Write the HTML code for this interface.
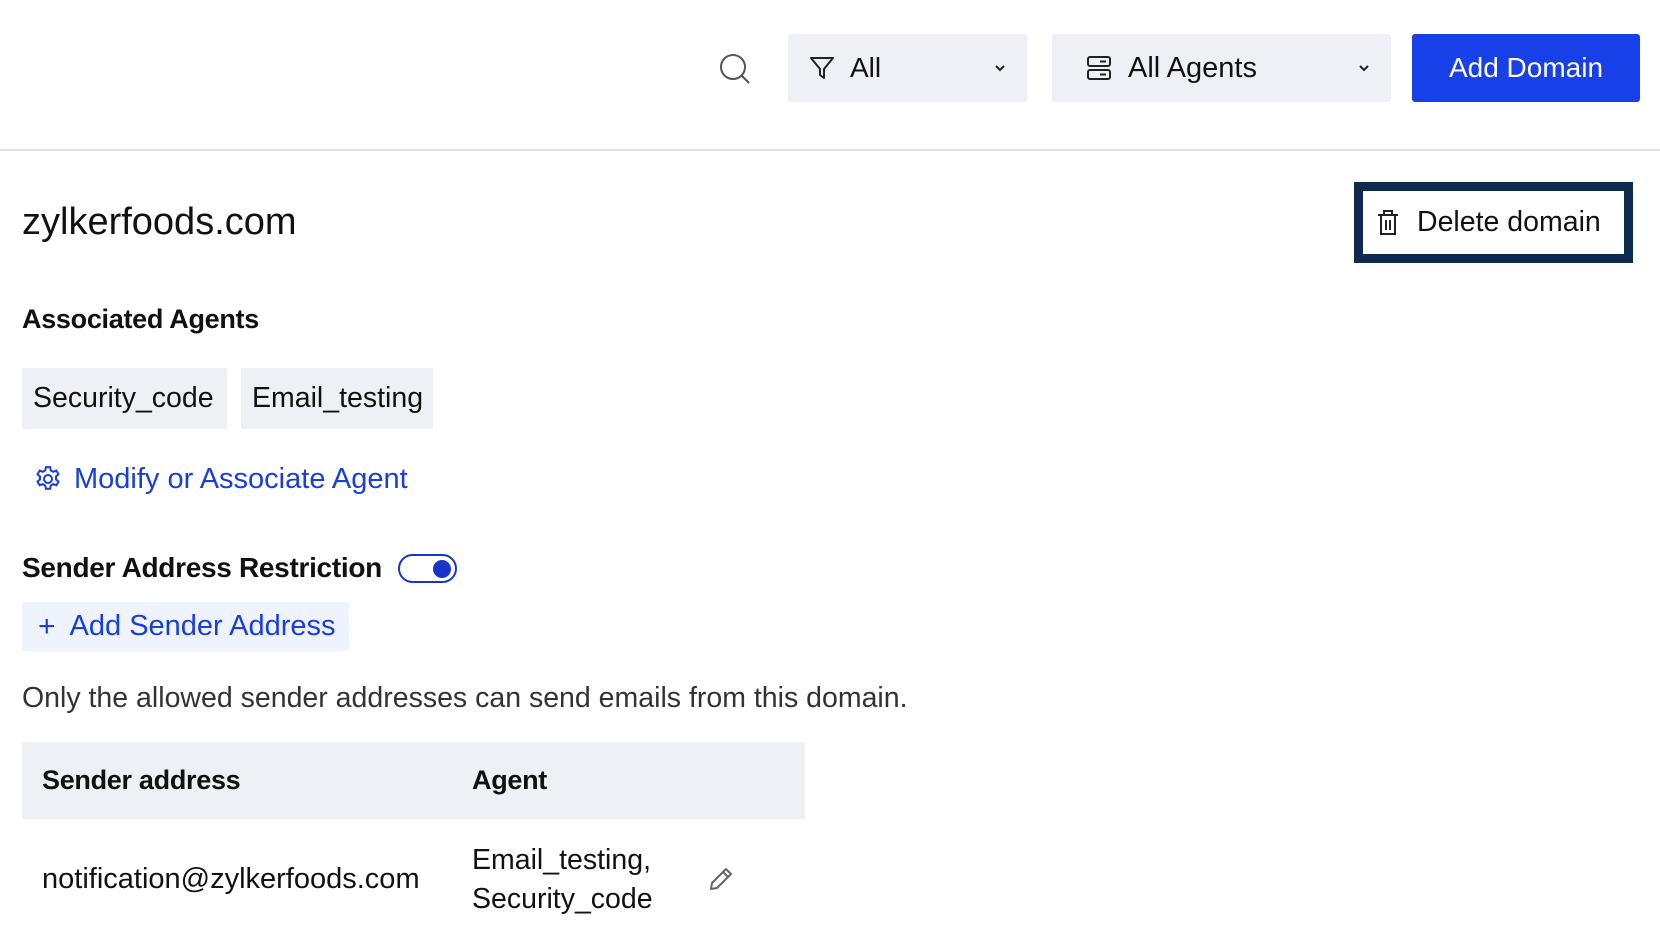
<!DOCTYPE html>
<html><head><meta charset="utf-8">
<style>
*{box-sizing:border-box;margin:0;padding:0}
body{width:1660px;height:936px;background:#fff;font-family:"Liberation Sans",sans-serif;color:#111;position:relative;overflow:hidden}
.abs{position:absolute}
.dd{position:absolute;top:34px;height:68px;background:#eff0f5;border-radius:3px;font-size:28px;display:flex;align-items:center}
.chip{position:absolute;top:368px;height:61px;background:#eff0f5;font-size:28.5px;display:flex;align-items:center;padding:0 11px;border-radius:2px}
.t{position:absolute;white-space:nowrap;line-height:1}
.b{font-weight:bold;letter-spacing:-0.3px}
</style></head><body>
<svg class="abs" style="left:718px;top:52px" width="34" height="34" viewBox="0 0 34 34" fill="none" stroke="#555" stroke-width="2"><circle cx="15" cy="15" r="12"/><path d="M24 24l7 7"/></svg>
<div class="dd" style="left:788px;width:239px">
 <svg style="margin-left:20px" width="28" height="28" viewBox="0 0 28 28" fill="none" stroke="#222" stroke-width="2" stroke-linejoin="round"><path d="M3 4h22l-9 11v9l-4-3v-6z"/></svg>
 <span style="margin-left:14px">All</span>
 <svg style="position:absolute;right:20px" width="14" height="10" viewBox="0 0 14 10" fill="none" stroke="#222" stroke-width="2"><path d="M3 3l4 4 4-4"/></svg>
</div>
<div class="dd" style="left:1052px;width:339px">
 <svg style="margin-left:34px" width="26" height="28" viewBox="0 0 26 28" fill="none" stroke="#222" stroke-width="2"><rect x="2" y="3" width="22" height="9" rx="2"/><rect x="2" y="16" width="22" height="9" rx="2"/><path d="M14 7.5h6M14 20.5h6"/></svg>
 <span style="margin-left:16px;font-size:29px">All Agents</span>
 <svg style="position:absolute;right:20px" width="14" height="10" viewBox="0 0 14 10" fill="none" stroke="#222" stroke-width="2"><path d="M3 3l4 4 4-4"/></svg>
</div>
<div class="abs" style="left:1412px;top:34px;width:228px;height:68px;background:#1740e8;border-radius:3px;color:#fff;font-size:28px;display:flex;align-items:center;justify-content:center">Add Domain</div>
<div class="abs" style="left:0;top:149px;width:1660px;height:2px;background:#e2e2e2"></div>
<div class="t" style="left:22px;top:203px;font-size:38px">zylkerfoods.com</div>
<div class="abs" style="left:1354px;top:182px;width:279px;height:81px;border:9px solid #0f2a4f;display:flex;align-items:center;font-size:28.5px">
 <svg style="margin-left:12px" width="26" height="30" viewBox="0 0 26 30" fill="none" stroke="#222" stroke-width="2"><path d="M3 7h20M9 7V3h8v4M6 7v19h14V7M11 12v10M15 12v10"/></svg>
 <span style="margin-left:16px">Delete domain</span>
</div>
<div class="t b" style="left:22px;top:306px;font-size:27px">Associated Agents</div>
<div class="chip" style="left:22px;width:205px">Security_code</div>
<div class="chip" style="left:241px;width:192px">Email_testing</div>
<svg class="abs" style="left:33px;top:464px" width="30" height="30" viewBox="0 0 24 24" fill="none" stroke="#1a3fd6" stroke-width="1.6"><circle cx="12" cy="12" r="3.2"/><path d="M10.3 2.5h3.4l.5 2.6 2 1.1 2.5-.9 1.7 2.9-2 1.8v2.3l2 1.8-1.7 2.9-2.5-.9-2 1.1-.5 2.6h-3.4l-.5-2.6-2-1.1-2.5.9-1.7-2.9 2-1.8V10l-2-1.8 1.7-2.9 2.5.9 2-1.1z"/></svg>
<div class="t" style="left:74px;top:465px;font-size:29px;color:#1a3fd6">Modify or Associate Agent</div>
<div class="t b" style="left:22px;top:554px;font-size:28px">Sender Address Restriction</div>
<div class="abs" style="left:398px;top:554px;width:59px;height:29px;border:2px solid #1736c9;border-radius:15px"><div class="abs" style="left:33px;top:4px;width:18px;height:18px;border-radius:50%;background:#1736c9"></div></div>
<div class="abs" style="left:22px;top:602px;width:327px;height:49px;background:#eef3fd;border-radius:3px;color:#1a3fd6;font-size:29px;display:flex;align-items:center">
 <span style="margin-left:16px;font-size:30px">+</span><span style="margin-left:14px">Add Sender Address</span>
</div>
<div class="t" style="left:22px;top:684px;font-size:28.5px;color:#333">Only the allowed sender addresses can send emails from this domain.</div>
<div class="abs" style="left:22px;top:742px;width:783px;height:77px;background:#eff0f5"></div>
<div class="t b" style="left:42px;top:767px;font-size:27px">Sender address</div>
<div class="t b" style="left:472px;top:767px;font-size:27px">Agent</div>
<div class="t" style="left:42px;top:865px;font-size:29px">notification@zylkerfoods.com</div>
<div class="t" style="left:472px;top:846px;font-size:28.5px">Email_testing,</div>
<div class="t" style="left:472px;top:885px;font-size:28.5px">Security_code</div>
<svg class="abs" style="left:707px;top:865px" width="28" height="28" viewBox="0 0 28 28" fill="none" stroke="#666" stroke-width="2" stroke-linejoin="round"><path d="M4 24l1-6L19 4l5 5L10 23z M16 7l5 5"/></svg>
</body></html>
